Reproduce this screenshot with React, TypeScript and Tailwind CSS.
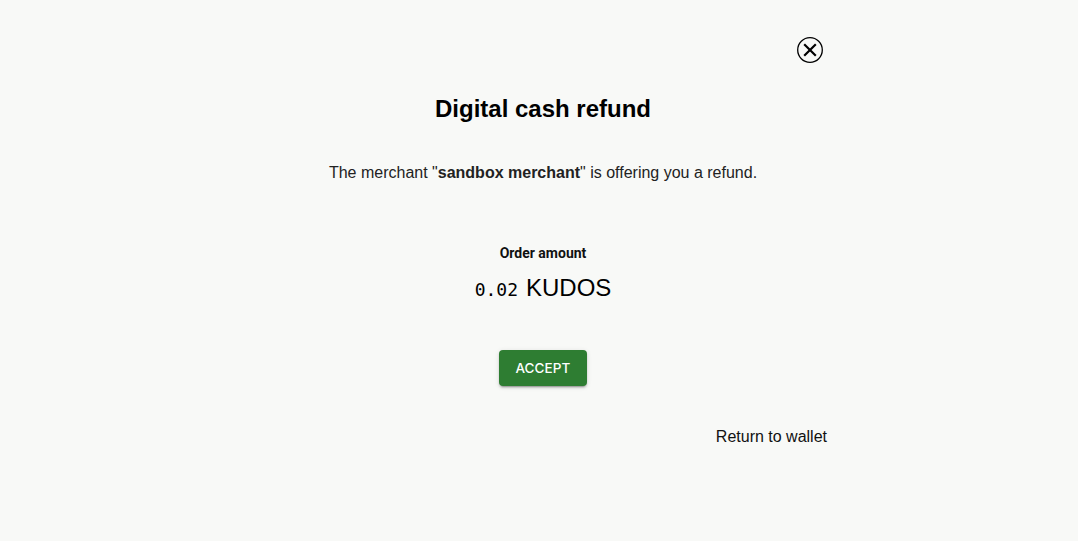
import React from 'react';

const CloseIcon: React.FC = () => (
  <svg width="26" height="26" viewBox="0 0 26 26" fill="none">
    <circle cx="13" cy="13" r="12.3" stroke="#000" strokeWidth="1.3" />
    <path d="M7.2 7.2 L18.8 18.8 M18.8 7.2 L7.2 18.8" stroke="#000" strokeWidth="2.2" strokeLinecap="butt" />
  </svg>
);

const App: React.FC = () => {
  return (
    <div className="min-h-screen bg-[#f8f9f7] flex justify-center font-['Liberation_Sans',Arial,sans-serif] text-black">
      <div className="w-[568px] ml-[8px] pt-[37px] flex flex-col">
        {/* close */}
        <div className="flex justify-end pr-[4px]">
          <button className="w-[26px] h-[26px]">
            <CloseIcon />
          </button>
        </div>

        <h1 className="mt-[32px] text-center text-[24px] leading-[28px] font-bold">Digital cash refund</h1>

        <p className="mt-[40px] text-center text-[16px] leading-[20px] text-[#222]">
          The merchant "<b>sandbox merchant</b>" is offering you a refund.
        </p>

        <div className="mt-[61px] text-center font-['Roboto',sans-serif] font-bold text-[14px] leading-[18px] text-[#111]">
          Order amount
        </div>
        <div className="mt-[12px] flex justify-center items-baseline gap-[8px] leading-[28px]">
          <span className="font-['DejaVu_Sans_Mono',monospace] text-[18px]">0.02</span>
          <span className="text-[24px]">KUDOS</span>
        </div>

        <div className="mt-[46px] flex justify-center">
          <button className="w-[88px] h-[36px] rounded-[4px] bg-[#2e7d32] text-white font-['Inter',sans-serif] font-medium text-[13.5px] tracking-[0.1px] uppercase shadow-[0_3px_1px_-2px_rgba(0,0,0,0.2),0_2px_2px_0_rgba(0,0,0,0.14),0_1px_5px_0_rgba(0,0,0,0.12)]">
            Accept
          </button>
        </div>

        <div className="mt-[41px] flex justify-end">
          <span className="text-[16px] leading-[20px] text-[#111]">Return to wallet</span>
        </div>
      </div>
    </div>
  );
};

export default App;
